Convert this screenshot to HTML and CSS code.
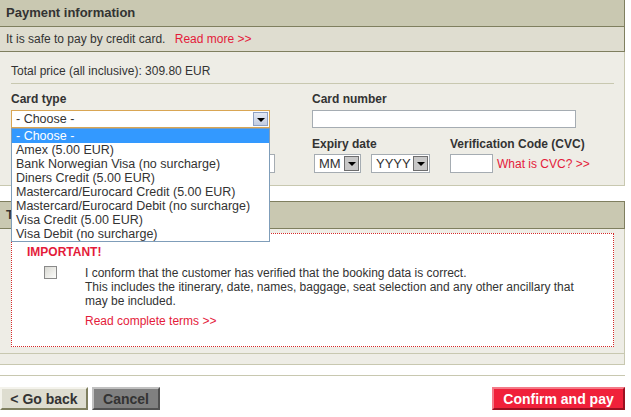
FILE: index.html
```html
<!DOCTYPE html>
<html lang="en">

<head>
    <meta charset="UTF-8">
    <meta name="viewport" content="width=device-width, initial-scale=1.0">
    <link rel="stylesheet" href="styles.css">
    <title>Payment information</title>
</head>

<body>
    <div class="page">
        <section class="panel">
            <h2 class="panel-title">Payment information</h2>
            <div class="panel-note">It is safe to pay by credit card. <a href="#" class="red-link">Read more &gt;&gt;</a></div>
            <div class="panel-body">
                <div class="total">Total price (all inclusive): 309.80 EUR</div>

                <div class="card-grid">
                    <div class="col-left">
                        <label class="field-label">Card type</label>
                        <div class="select select-wide focused">
                            <span class="select-text">- Choose -</span>
                            <span class="select-arrow blue"></span>

                            <!-- open dropdown list -->
                            <ul class="dropdown">
                                <li class="active">- Choose -</li>
                                <li>Amex (5.00 EUR)</li>
                                <li>Bank Norwegian Visa (no surcharge)</li>
                                <li>Diners Credit (5.00 EUR)</li>
                                <li>Mastercard/Eurocard Credit (5.00 EUR)</li>
                                <li>Mastercard/Eurocard Debit (no surcharge)</li>
                                <li>Visa Credit (5.00 EUR)</li>
                                <li>Visa Debit (no surcharge)</li>
                            </ul>
                        </div>
                        <div class="field-spacer"></div>
                        <input type="text" class="text-input holder">
                    </div>

                    <div class="col-right">
                        <label class="field-label">Card number</label>
                        <input type="text" class="text-input card-number">

                        <div class="sub-row">
                            <div class="expiry">
                                <label class="field-label second">Expiry date</label>
                                <div class="expiry-selects">
                                    <div class="select select-mm">
                                        <span class="select-text">MM</span>
                                        <span class="select-arrow"></span>
                                    </div>
                                    <div class="select select-yy">
                                        <span class="select-text">YYYY</span>
                                        <span class="select-arrow"></span>
                                    </div>
                                </div>
                            </div>
                            <div class="cvc">
                                <label class="field-label second">Verification Code (CVC)</label>
                                <div class="cvc-row">
                                    <input type="text" class="text-input cvc-input">
                                    <a href="#" class="red-link">What is CVC? &gt;&gt;</a>
                                </div>
                            </div>
                        </div>
                    </div>
                </div>
            </div>
        </section>

        <section class="panel terms">
            <h2 class="panel-title">Terms and conditions</h2>
            <div class="panel-body">
                <div class="terms-box">
                    <div class="important">IMPORTANT!</div>
                    <div class="confirm-row">
                        <span class="checkbox"></span>
                        <div class="confirm-text">
                            I conform that the customer has verified that the booking data is correct.<br>
                            This includes the itinerary, date, names, baggage, seat selection and any other ancillary that
                            may be included.
                            <div class="terms-link"><a href="#" class="red-link">Read complete terms &gt;&gt;</a></div>
                        </div>
                    </div>
                </div>
            </div>
            <div class="panel-foot"></div>
        </section>

        <div class="actions">
            <button class="btn btn-back">&lt; Go back</button>
            <button class="btn btn-cancel">Cancel</button>
            <button class="btn btn-confirm">Confirm and pay</button>
        </div>
    </div>
</body>

</html>
```

FILE: styles.css
```css
body {
    font-family: 'Liberation Sans', Arial, sans-serif;
    font-size: 12px;
    color: #333;
    margin: 0;
    padding: 0;
    background: #fff;
}

.page {
    width: 625px;
}

.red-link {
    color: #e41b3a;
    text-decoration: none;
}

/* panels */

.panel-title {
    margin: 0;
    height: 26px;
    line-height: 26px;
    padding: 0 6px;
    font-size: 13px;
    font-weight: bold;
    color: #333;
    background-color: #c9c8b1;
    border-bottom: 1px solid #7f7f5f;
    border-right: 1px solid #7f7f5f;
}

.panel-note {
    height: 24px;
    line-height: 24px;
    padding: 0 6px;
    background-color: #dfddd0;
    border-bottom: 1px solid #7f7f5f;
    border-right: 1px solid #7f7f5f;
}

.panel-note .red-link {
    margin-left: 6px;
}

.panel-body {
    background-color: #eeede6;
    padding: 0 10px 12px 11px;
    border-right: 1px solid #c8c8b0;
    border-bottom: 1px solid #c8c8b0;
}

.total {
    padding-top: 12px;
    padding-bottom: 5px;
    line-height: 14px;
    border-bottom: 1px solid #c8c8b0;
}

/* card fields */

.card-grid {
    display: flex;
    gap: 37px;
    padding-top: 8px;
}

.col-left {
    width: 264px;
    position: relative;
}

.col-right {
    width: 300px;
}

.field-label {
    display: block;
    font-weight: bold;
    line-height: 14px;
    margin-bottom: 4px;
}

.field-label.second {
    margin-top: 9px;
    margin-bottom: 3px;
}

/* the label of this field is hidden by the open list */
.field-spacer {
    height: 26px;
}

.text-input {
    display: block;
    box-sizing: border-box;
    height: 18px;
    margin: 0;
    padding: 0 3px;
    border: 1px solid #a5acb2;
    background: #fff;
    font-family: inherit;
}

.card-number {
    width: 264px;
}

.holder {
    width: 264px;
    height: 19px;
}

.select {
    position: relative;
    box-sizing: border-box;
    height: 19px;
    background: #fff;
    border: 1px solid #a5acb2;
    font-size: 13px;
    line-height: 17px;
    padding-left: 4px;
}

.select-wide {
    width: 259px;
    height: 18px;
    line-height: 16px;
    font-size: 12.5px;
}

.select.focused {
    border-color: #d9a653;
}

.select-arrow {
    position: absolute;
    top: 1px;
    right: 1px;
    bottom: 1px;
    width: 15px;
    box-sizing: border-box;
    background: #c8c8c8;
    border: 1px solid #6e6e6e;
}

.select-arrow::after {
    content: "";
    position: absolute;
    left: 3px;
    top: 5px;
    border-left: 4px solid transparent;
    border-right: 4px solid transparent;
    border-top: 4px solid #000;
}

.select-arrow.blue {
    background: linear-gradient(#e4e9f4, #c3cde2);
    border-color: #8ea1c4;
}

.dropdown {
    position: absolute;
    top: 17px;
    left: -1px;
    width: 259px;
    box-sizing: border-box;
    margin: 0;
    padding: 0;
    list-style: none;
    background: #fff;
    border: 1px solid #7f9db9;
    font-size: 12.5px;
    z-index: 10;
}

.dropdown li {
    line-height: 14px;
    padding-left: 4px;
    white-space: nowrap;
}

.dropdown li.active {
    background-color: #3399ff;
    color: #fff;
}

.sub-row {
    display: flex;
}

.expiry {
    width: 138px;
}

.expiry-selects {
    display: flex;
    gap: 10px;
    padding-left: 2px;
}

.select-mm {
    width: 47px;
}

.select-yy {
    width: 59px;
}

.cvc-row {
    display: flex;
    align-items: center;
    gap: 4px;
}

.cvc-input {
    width: 43px;
    height: 19px;
}

/* terms */

.terms {
    margin-top: 15px;
}

.terms .panel-title {
    border-top: 1px solid #7f7f5f;
}

.terms .panel-body {
    padding: 4px 10px 6px 11px;
}

.terms-box {
    background: #fff;
    border: 1px dotted #d42a2a;
    padding: 11px 15px 18px 15px;
}

.important {
    color: #e41b3a;
    font-weight: bold;
    line-height: 14px;
}

.confirm-row {
    display: flex;
    margin-top: 6px;
}

.checkbox {
    width: 13px;
    height: 13px;
    box-sizing: border-box;
    margin: 1px 28px 0 17px;
    flex-shrink: 0;
    border: 1px solid #8a8a8a;
    background: linear-gradient(135deg, #d8d8d2, #fdfdfb);
}

.confirm-text {
    line-height: 14px;
    padding-top: 1px;
}

.terms-link {
    margin-top: 6px;
}

.panel-foot {
    height: 10px;
    background-color: #eeede6;
    border-right: 1px solid #c8c8b0;
    border-bottom: 1px solid #c8c8b0;
}

/* buttons */

.actions {
    display: flex;
    gap: 4px;
    margin-top: 10px;
    padding-top: 11px;
    border-top: 1px solid #c8c8b0;
}

.btn {
    height: 23px;
    padding: 0 8px;
    font-family: inherit;
    font-size: 14px;
    font-weight: bold;
    color: #333;
    border: 2px solid;
    cursor: pointer;
}

.btn-back {
    width: 88px;
    background-color: #deddd0;
    border-color: #f4f3ec #7f7f5f #7f7f5f #f4f3ec;
}

.btn-cancel {
    width: 68px;
    background-color: #808080;
    border-color: #c0c0c0 #505050 #505050 #c0c0c0;
}

.btn-confirm {
    width: 133px;
    margin-left: auto;
    color: #fff;
    background-color: #f0213a;
    border-color: #f47a88 #9a1020 #9a1020 #f47a88;
}
```
